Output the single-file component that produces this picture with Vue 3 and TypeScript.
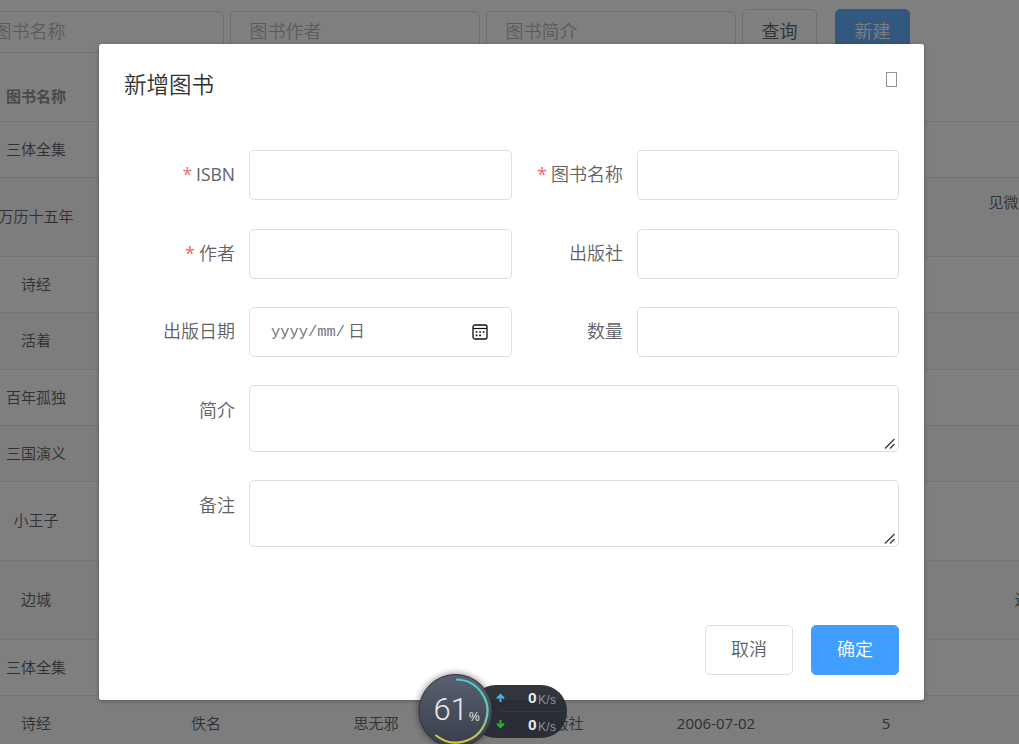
<script setup lang="ts">
interface Row {
  h: number
  cells: string[]
}

const filters: string[] = ['图书名称', '图书作者', '图书简介']

const rows: Row[] = [
  { h: 56, cells: ['三体全集', '', '', '', '', '', ''] },
  { h: 79, cells: ['万历十五年', '', '', '', '', '', '见微知著，历史不再'] },
  { h: 56, cells: ['诗经', '', '', '', '', '', ''] },
  { h: 57, cells: ['活着', '', '', '', '', '', ''] },
  { h: 56, cells: ['百年孤独', '', '', '', '', '', ''] },
  { h: 56, cells: ['三国演义', '', '', '', '', '', ''] },
  { h: 79, cells: ['小王子', '', '', '', '', '', ''] },
  { h: 79, cells: ['边城', '', '', '', '', '', '边城的故事..'] },
  { h: 56, cells: ['三体全集', '', '', '', '', '', ''] },
  { h: 56, cells: ['诗经', '佚名', '思无邪', '北京出版社', '2006-07-02', '5', ''] },
]

const isLatin = (s: string): boolean => /^[\d-]+$/.test(s)
</script>

<template>
  <div class="screen">
    <div class="page">
      <div class="filters">
        <div v-for="f in filters" :key="f" class="filter">{{ f }}</div>
        <button class="fbtn">查询</button>
        <button class="fbtn primary">新建</button>
      </div>
      <div class="table">
        <div class="row head"><div class="cell">图书名称</div></div>
        <div
          v-for="(r, i) in rows"
          :key="i"
          class="row"
          :class="{ striped: i % 2 === 1, upper: i === 1, high: r.h === 79 || r.h === 57 }"
          :style="{ height: r.h + 'px' }"
        >
          <div v-for="(c, j) in r.cells" :key="j" class="cell" :class="{ latin: isLatin(c) }">{{ c }}</div>
        </div>
      </div>
    </div>

    <div class="overlay">
      <section class="dialog">
        <header>
          <h2>新增图书</h2>
          <button class="close" aria-label="close"></button>
        </header>
        <form class="form" @submit.prevent>
          <label class="req latin">ISBN</label>
          <div class="field"></div>
          <label class="req">图书名称</label>
          <div class="field"></div>

          <label class="req">作者</label>
          <div class="field"></div>
          <label>出版社</label>
          <div class="field"></div>

          <label>出版日期</label>
          <div class="field date">
            <span class="mask">yyyy/mm/</span><span class="day">日</span>
            <svg class="cal" width="16" height="16" viewBox="0 0 16 16">
              <rect x="1" y="1" width="14" height="14" rx="2" fill="none" stroke="#111" stroke-width="1.3" />
              <path d="M1 4.5H15" stroke="#111" stroke-width="1.2" />
              <path d="M3.7 8h1.7M7.2 8h1.7M10.7 8h1.7M3.7 11.3h1.7M7.2 11.3h1.7" stroke="#111" stroke-width="1.7" />
            </svg>
          </div>
          <label>数量</label>
          <div class="field"></div>

          <label class="tall">简介</label>
          <div class="field area">
            <svg class="grip" width="12" height="12" viewBox="0 0 12 12">
              <path d="M1 10.5L10.5 1M6 10.5L10.5 6" stroke="#444" stroke-width="1.5" />
            </svg>
          </div>

          <label class="tall">备注</label>
          <div class="field area">
            <svg class="grip" width="12" height="12" viewBox="0 0 12 12">
              <path d="M1 10.5L10.5 1M6 10.5L10.5 6" stroke="#444" stroke-width="1.5" />
            </svg>
          </div>
        </form>
        <footer>
          <button class="btn">取消</button>
          <button class="btn primary">确定</button>
        </footer>
      </section>
    </div>

    <svg class="meter" width="170" height="84" viewBox="0 0 170 84">
      <defs>
        <linearGradient id="ring" x1="0" y1="0" x2="0" y2="1">
          <stop offset="0" stop-color="#45cfd0" />
          <stop offset="0.5" stop-color="#62cfab" />
          <stop offset="1" stop-color="#d9c33c" />
        </linearGradient>
        <linearGradient id="disc" x1="0" y1="0" x2="0" y2="1">
          <stop offset="0" stop-color="#5b6070" />
          <stop offset="1" stop-color="#383d4b" />
        </linearGradient>
        <filter id="soft" x="-20%" y="-20%" width="140%" height="140%">
          <feGaussianBlur stdDeviation="3" />
        </filter>
      </defs>
      <circle cx="45.5" cy="51" r="38" fill="#000" opacity="0.4" filter="url(#soft)" />
      <rect x="60" y="25" width="97" height="53" rx="26" fill="#262a34" opacity="0.95" />
      <path d="M90 51.5H156" stroke="#343842" />
      <circle cx="45.5" cy="51" r="36.5" fill="url(#disc)" stroke="#303440" />
      <path d="M46 19.5A31.5 31.5 0 1 1 25.5 75" fill="none" stroke="url(#ring)" stroke-width="2.2" />
      <text x="23.5" y="60" class="big">61</text>
      <text x="59" y="61" class="pct">%</text>
      <path d="M90.5 42V35M87 38.5L90.5 35L94 38.5" fill="none" stroke="#4db4ef" stroke-width="2" />
      <path d="M90.5 60V67M87 63.5L90.5 67L94 63.5" fill="none" stroke="#2fae35" stroke-width="2" />
      <text x="118" y="43" class="num">0</text>
      <text x="128" y="43.5" class="unit">K/s</text>
      <text x="118" y="70" class="num">0</text>
      <text x="128" y="70.5" class="unit">K/s</text>
    </svg>
  </div>
</template>

<style>
body {
  margin: 0;
  overflow: hidden;
}
</style>

<style scoped>
.screen {
  position: relative;
  width: 1019px;
  height: 744px;
  overflow: hidden;
  background: #fff;
  color: #606266;
  font-family: 'Noto Sans', 'Noto Sans CJK SC', sans-serif;
  font-size: 18px;
  font-weight: 350;
}
.screen * {
  box-sizing: border-box;
}
.screen .latin {
  font-family: 'Open Sans', 'Noto Sans', sans-serif;
  font-weight: 400;
}
button {
  font: inherit;
  color: inherit;
  padding: 0;
}
.page {
  margin-left: -49px;
  width: 1190px;
}
.filters {
  display: flex;
  align-items: flex-start;
  gap: 6px;
  padding: 9px 0 0 23px;
  height: 72px;
}
.filter {
  width: 250px;
  height: 42px;
  margin-top: 2px;
  padding-left: 18.5px;
  border: 1px solid #dcdfe6;
  border-radius: 5px;
  line-height: 39px;
  color: #b4b7be;
}
.fbtn {
  width: 75px;
  height: 45px;
  border: 1px solid #dcdfe6;
  border-radius: 5px;
  background: #fff;
  line-height: 41px;
  padding-bottom: 1px;
}
.fbtn.primary {
  margin-left: 12px;
  background: #66b1ff;
  border-color: #66b1ff;
  color: #fff;
}
.table {
  font-size: 15px;
}
.row {
  display: flex;
  align-items: center;
  border-bottom: 1px solid #e5e8f0;
}
.row.head {
  height: 50px;
  font-weight: 700;
  color: #909399;
}
.striped {
  background: #fafafa;
}
.cell {
  width: 170px;
  padding: 0 14px;
  text-align: center;
  line-height: 29px;
  white-space: nowrap;
}
.high .cell {
  margin-bottom: 1px;
}
.upper .cell:last-child {
  margin-bottom: 29px;
}
.overlay {
  position: absolute;
  inset: 0;
  background: rgba(0, 0, 0, 0.5);
  padding: 44px 0 0 99px;
}
.dialog {
  width: 825px;
  height: 656px;
  padding: 25px;
  border-radius: 2.5px;
  background: #fff;
  box-shadow: 0 1px 4px rgba(0, 0, 0, 0.3);
  display: flex;
  flex-direction: column;
}
header {
  display: flex;
  justify-content: space-between;
  align-items: flex-start;
  height: 81px;
}
h2 {
  margin: 0;
  font-size: 22.5px;
  line-height: 32px;
  font-weight: 350;
  color: #303133;
}
.close {
  width: 11px;
  height: 15px;
  margin: 3px 2px 0 0;
  border: 1px solid #909399;
  background: none;
}
.form {
  display: grid;
  grid-template-columns: 125px 263px 125px 262px;
  grid-template-rows: 51px 50px 50px 67px 67px;
  row-gap: 28px;
}
label {
  padding-right: 14px;
  line-height: 49px;
  text-align: right;
}
label.tall {
  line-height: 51px;
}
label.latin {
  font-size: 17.5px;
}
.req::before {
  content: '*';
  color: #f56c6c;
  font-weight: 400;
  margin-right: 4px;
}
.field {
  height: 50px;
  border: 1px solid #dcdfe6;
  border-radius: 5px;
}
.area {
  grid-column: 2 / 5;
  height: 67px;
  display: flex;
  justify-content: flex-end;
  align-items: flex-end;
  padding: 0 2px 1px 0;
}
.date {
  display: flex;
  align-items: center;
  padding: 0 23px 0 21px;
}
.mask {
  font-family: 'Liberation Mono', monospace;
  font-size: 15.4px;
  color: #74777c;
}
.day {
  margin-left: 3px;
  font-size: 17px;
  line-height: 20px;
  padding-bottom: 2px;
}
.cal {
  margin-left: auto;
}
footer {
  margin-top: auto;
  display: flex;
  justify-content: flex-end;
  gap: 18px;
}
.btn {
  width: 88px;
  height: 50px;
  border: 1px solid #dcdfe6;
  border-radius: 5px;
  background: #fff;
  padding-bottom: 4px;
}
.btn.primary {
  background: #409eff;
  border-color: #409eff;
  color: #fff;
}
.meter {
  position: absolute;
  left: 410px;
  top: 660px;
}
.meter text {
  font-family: 'Liberation Sans', sans-serif;
  font-weight: 400;
  fill: #e8e9ec;
}
.meter .big {
  font-family: Roboto, sans-serif;
  font-size: 31px;
  font-weight: 300;
}
.meter .pct {
  font-size: 12px;
}
.meter .num {
  font-size: 15.5px;
  font-weight: 700;
}
.meter .unit {
  font-size: 12px;
  letter-spacing: 0.3px;
  fill: #92959c;
}
</style>
